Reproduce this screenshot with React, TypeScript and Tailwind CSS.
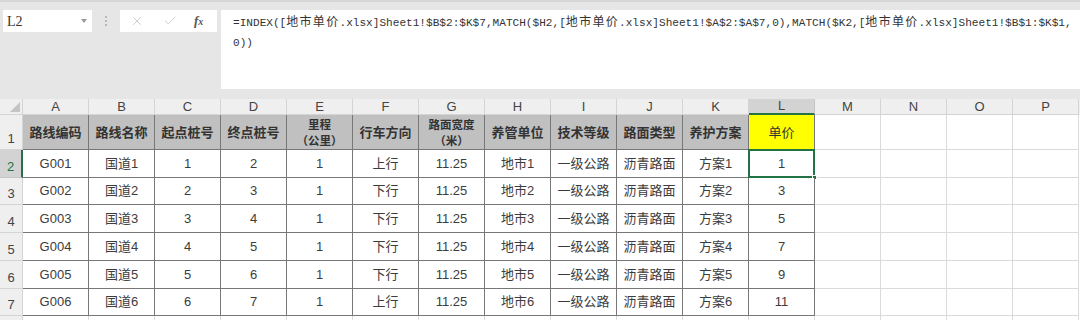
import React from "react";
import { X, Check } from "lucide-react";

const COLS = ["A", "B", "C", "D", "E", "F", "G", "H", "I", "J", "K", "L", "M", "N", "O", "P"];

const HEADERS: string[][] = [
  ["路线编码"],
  ["路线名称"],
  ["起点桩号"],
  ["终点桩号"],
  ["里程", "（公里）"],
  ["行车方向"],
  ["路面宽度", "（米）"],
  ["养管单位"],
  ["技术等级"],
  ["路面类型"],
  ["养护方案"],
];

const DIRS = ["上行", "下行", "下行", "下行", "下行", "上行"];
const ROW_H = ["h-[28px]", "h-[27px]", "h-[28px]", "h-[28px]", "h-[28px]", "h-[27px]"];

const ROWS = DIRS.map((dir, i) => {
  const n = i + 1;
  return [
    `G00${n}`,
    `国道${n}`,
    `${n}`,
    `${n + 1}`,
    "1",
    dir,
    "11.25",
    `地市${n}`,
    "一级公路",
    "沥青路面",
    `方案${n}`,
    `${2 * n - 1}`,
  ];
});

const FONT = "font-['Liberation_Sans','Noto_Sans_CJK_SC',sans-serif]";
const MONO = "font-['Liberation_Mono','Noto_Sans_CJK_SC',monospace]";

// CJK in the formula bar: same advance as the reference (~13.3px) but a smaller glyph
function Cjk({ children }: { children: React.ReactNode }) {
  return <span className="text-[12px] tracking-[1.3px]">{children}</span>;
}

function FormulaBar() {
  return (
    <div className="flex h-[99px] bg-[#e6e6e6] border-t-2 border-[#d6d6d6]">
      <div className="flex pt-[8px] w-full">
        <div className="ml-[3px] w-[89px] h-[22px] bg-white flex items-center justify-between px-[4px] font-['Liberation_Serif',serif] text-[14px] text-[#333]">
          <span>L2</span>
          <svg width="6" height="4" viewBox="0 0 6 4" className="mr-[1px]">
            <path d="M0 0 L6 0 L3 4 Z" fill="#9a9a9a" />
          </svg>
        </div>
        <div className="w-[28px] flex justify-center pt-[6px]">
          <div className="flex flex-col gap-[2px]">
            <span className="w-[2px] h-[2px] bg-[#b8b8b8]" />
            <span className="w-[2px] h-[2px] bg-[#b8b8b8]" />
            <span className="w-[2px] h-[2px] bg-[#b8b8b8]" />
          </div>
        </div>
        <div className="w-[97px] h-[22px] bg-white flex items-center pl-[10px]">
          <X size={14} strokeWidth={1.3} className="text-[#bdbdbd]" />
          <Check size={14} strokeWidth={1.3} className="ml-[19px] text-[#bdbdbd]" />
          <span className="ml-[17px] font-['Liberation_Serif',serif] italic font-bold text-[13px] text-[#555]">
            f<span className="text-[10px]">x</span>
          </span>
        </div>
        <div className={`ml-[4px] flex-1 h-[79px] bg-white pl-[12px] pt-[3px] ${MONO} text-[11.1px] leading-[20px] text-[#333] whitespace-nowrap overflow-hidden`}>
          <div>
            =INDEX([<Cjk>地市单价</Cjk>.xlsx]Sheet1!$B$2:$K$7,MATCH($H2,[<Cjk>地市单价</Cjk>.xlsx]Sheet1!$A$2:$A$7,0),MATCH($K2,[<Cjk>地市单价</Cjk>.xlsx]Sheet1!$B$1:$K$1,
          </div>
          <div>0))</div>
        </div>
      </div>
    </div>
  );
}

function ColumnHeaders() {
  return (
    <div className={`flex h-[16px] bg-[#efefef] ${FONT} text-[13px] text-[#444]`}>
      <div className="w-[23px] shrink-0 relative border-r border-b border-[#d4d4d4]">
        <svg width="10" height="10" viewBox="0 0 10 10" className="absolute right-[2px] bottom-[2px]">
          <path d="M10 0 L10 10 L0 10 Z" fill="#c4c4c4" />
        </svg>
      </div>
      {COLS.map((c) => (
        <div
          key={c}
          className={
            c === "L"
              ? "w-[66px] shrink-0 flex items-center justify-center bg-[#d3d3d3] border-r border-[#c4c4c4] border-b-2 border-b-[#217346]"
              : "w-[66px] shrink-0 flex items-center justify-center border-r border-b border-[#d4d4d4]"
          }
        >
          {c}
        </div>
      ))}
    </div>
  );
}

function RowHeader({ n, active }: { n: number; active?: boolean }) {
  return (
    <div
      className={
        active
          ? `w-[23px] shrink-0 flex items-end justify-center pb-[1px] bg-[#d3d3d3] border-b border-[#c4c4c4] border-r-2 border-r-[#217346] ${FONT} text-[13px] text-[#217346]`
          : `w-[23px] shrink-0 flex items-end justify-center pb-[1px] bg-[#efefef] border-b border-r border-[#d4d4d4] ${FONT} text-[13px] text-[#444]`
      }
    >
      {n}
    </div>
  );
}

function Empty() {
  return (
    <>
      {["M", "N", "O", "P"].map((c) => (
        <div key={c} className="w-[66px] shrink-0 border-r border-b border-[#dadada] bg-white" />
      ))}
    </>
  );
}

export default function App() {
  return (
    <div className="w-[1080px] h-[320px] overflow-hidden bg-white">
      <FormulaBar />
      <ColumnHeaders />

      <div className="flex h-[35px]">
        <RowHeader n={1} />
        {HEADERS.map((lines) => (
          <div
            key={lines[0]}
            className="w-[66px] shrink-0 flex flex-col items-center justify-center bg-[#c0c0c0] border-r border-b border-[#777] font-['Noto_Sans_CJK_SC',sans-serif] font-bold text-[#333]"
          >
            {lines.length === 1 ? (
              <span className="text-[13px]">{lines[0]}</span>
            ) : (
              lines.map((l) => (
                <span key={l} className="text-[11.5px] leading-[16px]">
                  {l}
                </span>
              ))
            )}
          </div>
        ))}
        <div className="w-[66px] shrink-0 flex items-center justify-center bg-[#ffff00] border-r border-b border-[#777] font-['Noto_Sans_CJK_SC',sans-serif] text-[13px] text-[#333]">
          单价
        </div>
        <Empty />
      </div>

      {ROWS.map((row, r) => (
        <div key={r} className={`flex ${ROW_H[r]}`}>
          <RowHeader n={r + 2} active={r === 0} />
          {row.map((v, c) => (
            <div
              key={c}
              className={`relative w-[66px] shrink-0 flex items-center justify-center bg-white border-r border-b border-[#777] ${FONT} text-[13px] text-[#3c3c3c]`}
            >
              {v}
              {r === 0 && c === 11 && (
                <>
                  <div className="absolute -left-[1px] -top-[1px] -right-[1px] -bottom-[1px] border-2 border-[#217346]" />
                  <div className="absolute -right-[3px] -bottom-[3px] w-[5px] h-[5px] bg-[#217346] border border-white" />
                </>
              )}
            </div>
          ))}
          <Empty />
        </div>
      ))}

      <div className="flex h-[10px]">
        <div className="w-[23px] shrink-0 bg-[#efefef] border-r border-[#d4d4d4]" />
        {COLS.map((c) => (
          <div key={c} className="w-[66px] shrink-0 border-r border-[#dadada]" />
        ))}
      </div>
    </div>
  );
}
